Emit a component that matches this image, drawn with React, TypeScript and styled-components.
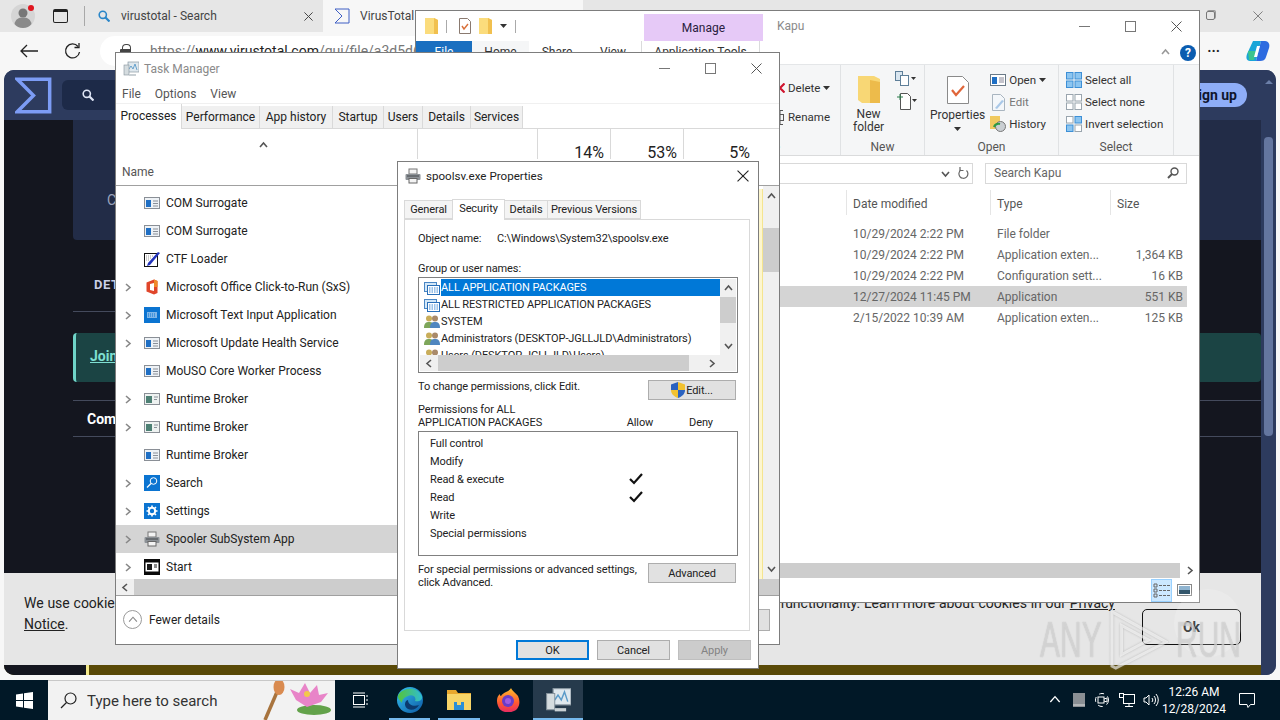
import React from "react";
import styled, { createGlobalStyle } from "styled-components";

const UI = `Roboto, "Liberation Sans", sans-serif`;

const GlobalStyle = createGlobalStyle`
  html, body { margin: 0; padding: 0; width: 1280px; height: 720px; overflow: hidden; }
  body { font-family: ${UI}; font-size: 12px; color: #1a1a1a; }
  * { box-sizing: border-box; }
  svg { display: block; flex: none; }
`;

// ---------- icons ----------
const Sigma = ({ size = 16, color = "#3f5fc4", w = 2 }: { size?: number; color?: string; w?: number }) => (
  <svg width={size} height={size} viewBox="0 0 32 32" fill="none" stroke={color} strokeWidth={w}>
    <path d="M2 2H30V30H2L16 16Z" />
  </svg>
);
const Cross = ({ size = 11, color = "#555", w = 1 }: { size?: number; color?: string; w?: number }) => (
  <svg width={size} height={size} viewBox="0 0 11 11" stroke={color} strokeWidth={w}><path d="M.5.5l10 10M10.5.5l-10 10" /></svg>
);
const Minimize = () => (<svg width={11} height={11} stroke="#777"><path d="M0 5.5h11" /></svg>);
const Maximize = () => (<svg width={11} height={11} fill="none" stroke="#777"><rect x=".5" y=".5" width="10" height="10" /></svg>);
const Chevron = ({ dir = "right", color = "#666", size = 9, w = 1.6 }: { dir?: string; color?: string; size?: number; w?: number }) => {
  const d: Record<string, string> = { right: "M3 1l4 3.5L3 8", left: "M6 1L2 4.5 6 8", up: "M1 6l3.5-4L8 6", down: "M1 3l3.5 4L8 3" };
  return (<svg width={size} height={size} viewBox="0 0 9 9" fill="none" stroke={color} strokeWidth={w}><path d={d[dir]} /></svg>);
};
const Drop = () => (<svg width={7} height={4} fill="#333"><path d="M0 0h7L3.5 4z" /></svg>);
const FolderSmall = () => (
  <svg width={13} height={16} viewBox="0 0 13 16"><path d="M0 0h9l4 2v14H0z" fill="#fbdc7c" /><path d="M9 0l4 2v14H9z" fill="#f1c04f" /></svg>
);
const CheckDoc = () => (
  <svg width={12} height={16} viewBox="0 0 12 16"><path d="M.5.5h8l3 3v12H.5z" fill="#fff" stroke="#8a7a70" /><path d="M3 8l2 3 4-5" fill="none" stroke="#d9703a" strokeWidth="1.4" /></svg>
);
const ProcessWin = () => (
  <svg width={16} height={16} viewBox="0 0 16 16"><rect x=".5" y="2.5" width="15" height="11" fill="#eef2f6" stroke="#8a8f96" /><rect x="2" y="5" width="5" height="7" fill="#1f6fc4" /><path d="M9 6h5M9 8.5h5M9 11h5" stroke="#8a9099" /></svg>
);
const RuntimeWin = () => (
  <svg width={16} height={16} viewBox="0 0 16 16"><rect x=".5" y="2.5" width="15" height="11" fill="#eef2f1" stroke="#8a8f96" /><rect x="2" y="5" width="6" height="7" fill="#4d8074" /><path d="M10 6h4M10 8.5h3" stroke="#8a9099" /></svg>
);
const PenIcon = () => (
  <svg width={16} height={16} viewBox="0 0 16 16"><rect x=".5" y="2.5" width="13" height="13" fill="#fff" stroke="#111" /><path d="M2 5h8M2 7h5M2 9h3" stroke="#999" strokeDasharray="1 1" /><path d="M4 12L14 1l2 1L6 14l-3 1z" fill="#2233bb" /></svg>
);
const OfficeIcon = () => (
  <svg width={16} height={16} viewBox="0 0 16 16"><path d="M2.5 3.5L10 .5l3.5 1.5v12L10 15.5l-7.5-3z" fill="#e0452a" /><path d="M6 5l4-1v8l-4-1z" fill="#fff" /><path d="M10 .5l3.5 1.5v6H10z" fill="#f08a2a" /></svg>
);
const KeyboardTile = () => (
  <svg width={16} height={16} viewBox="0 0 16 16"><rect width="16" height="16" fill="#0b74d1" /><rect x="3" y="5" width="10" height="6" fill="#7fb6e8" /><path d="M4 7h8M4 9h8" stroke="#0b74d1" strokeDasharray="1 1" /></svg>
);
const SearchTile = () => (
  <svg width={16} height={16} viewBox="0 0 16 16" fill="none"><rect width="16" height="16" fill="#0b74d1" /><circle cx="9.5" cy="6" r="3.3" stroke="#fff" /><path d="M7 8.5l-4 4" stroke="#fff" strokeWidth="1.2" /></svg>
);
const SettingsTile = () => (
  <svg width={16} height={16} viewBox="0 0 16 16"><rect width="16" height="16" fill="#0b74d1" /><circle cx="8" cy="8" r="3.2" fill="none" stroke="#fff" strokeWidth="2" /><path d="M8 2.5v2M8 11.5v2M2.5 8h2M11.5 8h2M4 4l1.5 1.5M10.5 10.5L12 12M12 4l-1.5 1.5M5.5 10.5L4 12" stroke="#fff" strokeWidth="1.6" /></svg>
);
const PrinterIcon = () => (
  <svg width={16} height={16} viewBox="0 0 16 16"><rect x="4" y="1" width="8" height="5" fill="#f3f3f3" stroke="#777" /><rect x=".5" y="6" width="15" height="6" rx="1" fill="#8c9196" /><path d="M2 8h12" stroke="#44484c" /><rect x="4" y="10.5" width="8" height="4.5" fill="#f3f3f3" stroke="#666" /></svg>
);
const StartTile = () => (
  <svg width={16} height={16} viewBox="0 0 16 16"><rect width="16" height="16" fill="#0a0a0a" /><rect x="1.5" y="3.5" width="13" height="9" fill="#fff" /><rect x="3" y="5" width="5" height="6" fill="#1a1a1a" /><path d="M10 6h3M10 8h3" stroke="#1a1a1a" /></svg>
);
const PackageIcon = () => (
  <svg width={16} height={16} viewBox="0 0 16 16"><rect x=".5" y="2.5" width="12" height="9" fill="#d4e8f8" stroke="#4a86c4" /><rect x="3.5" y="5.5" width="12" height="9" fill="#fff" stroke="#2a6fb8" /><path d="M5 8h9M5 10h9M5 12h9" stroke="#3b87d4" strokeDasharray="1.5 1" /></svg>
);
const UsersIcon = () => (
  <svg width={16} height={16} viewBox="0 0 16 16"><circle cx="5" cy="4.5" r="3" fill="#c9ad5a" /><path d="M0 14c0-5 2-6 5-6s5 1 5 6z" fill="#7ea65a" /><circle cx="11" cy="4.5" r="3" fill="#a98a6a" /><path d="M6 14c0-5 2-6 5-6s5 1 5 6z" fill="#4f86c0" /></svg>
);
const Shield = () => (
  <svg width={14} height={16} viewBox="0 0 14 16"><path d="M7 0L0 2.5V8h7z" fill="#2a62c0" /><path d="M7 0l7 2.5V8H7z" fill="#f2c230" /><path d="M0 8c0 4 3 6.5 7 8V8z" fill="#f2c230" /><path d="M14 8c0 4-3 6.5-7 8V8z" fill="#2a62c0" /></svg>
);
const Check = () => (
  <svg width={14} height={12} viewBox="0 0 14 12" fill="none" stroke="#111" strokeWidth="2.2"><path d="M1 6l4 4 8-9" /></svg>
);
const SmallMagnifier = ({ color = "#555" }: { color?: string }) => (
  <svg width={12} height={12} viewBox="0 0 12 12" fill="none" stroke={color} strokeWidth="1.4"><circle cx="7.5" cy="4.5" r="3.5" /><path d="M5 7l-4 4" strokeWidth="2" /></svg>
);
const GlassRight = ({ color = "#555" }: { color?: string }) => (
  <svg width={12} height={12} viewBox="0 0 12 12" fill="none" stroke={color} strokeWidth="1.6"><circle cx="4.8" cy="4.8" r="3.6" /><path d="M7.5 7.5l4 4" strokeWidth="2.2" /></svg>
);
const TaskManagerIcon = ({ size = 16 }: { size?: number }) => (
  <svg width={size} height={size} viewBox="0 0 16 16"><rect x="5" y="1" width="11" height="10" fill="#dfe8ee" stroke="#8b98a2" strokeWidth=".7" /><path d="M6 8l2-3 2 3 2-5 2 6" fill="none" stroke="#5a9ac8" strokeWidth=".9" /><rect x="1" y="4" width="5" height="10" fill="#d5dcdf" stroke="#84919b" strokeWidth=".6" /><path d="M6 13h7v2H6z" fill="#c9d0d4" /></svg>
);
const BigFolder = () => (
  <svg width={22} height={27} viewBox="0 0 22 27"><path d="M0 0h16l6 3v24H4l-4-3z" fill="#f8d775" /><path d="M12 4l10 2v21H12z" fill="#edbb4b" /></svg>
);
const CopyIcon = () => (
  <svg width={22} height={16} viewBox="0 0 22 16" fill="none" stroke="#5e7f99"><rect x=".5" y=".5" width="7" height="9" fill="#d9e6f0" /><rect x="5.5" y="4.5" width="8" height="10" fill="#fff" /><path d="M16 6h5l-2.5 3z" fill="#333" stroke="none" /></svg>
);
const NewItemIcon = () => (
  <svg width={22} height={17} viewBox="0 0 22 17" fill="none" stroke="#555"><path d="M5.5.5h7l3 3v13h-10z" fill="#fff" /><path d="M2 4h6M5 1v6" stroke="#2a7a4a" /><path d="M17 6h5l-2.5 3z" fill="#333" stroke="none" /></svg>
);
const PropertiesIcon = () => (
  <svg width={22} height={28} viewBox="0 0 22 28"><path d="M.5.5h15l6 6v21H.5z" fill="#fff" stroke="#8a8a8a" /><path d="M5 14l4 5 8-9" fill="none" stroke="#e0663a" strokeWidth="2.2" /></svg>
);
const OpenIcon = () => (
  <svg width={16} height={12} viewBox="0 0 16 12"><rect x=".5" y=".5" width="15" height="11" fill="#fff" stroke="#6a7a88" /><rect x="2" y="3" width="5" height="7" fill="#1f6fc4" /><path d="M9 4h5M9 6h5M9 8h5" stroke="#889" /></svg>
);
const EditIcon = () => (
  <svg width={16} height={17} viewBox="0 0 16 17"><path d="M2.5.5h8l4 4v12h-12z" fill="#f4f7fa" stroke="#a9b5c0" /><path d="M5 14l7-8 2 1-7 8z" fill="#a9c8e8" /></svg>
);
const HistoryIcon = () => (
  <svg width={16} height={16} viewBox="0 0 16 16"><path d="M0 0h10v13H0z" fill="#f0c95f" /><circle cx="10.5" cy="10.5" r="5" fill="#c9ced2" stroke="#777" /><path d="M4 11a5 5 0 0 1 6-3" stroke="#2f9a44" strokeWidth="2.2" fill="none" /></svg>
);
const RenameIcon = () => (
  <svg width={10} height={15} viewBox="0 0 10 15" fill="none" stroke="#555"><path d="M2 .5h6M5 .5v14M2 14.5h6" /><rect x="1.5" y="4.5" width="7" height="6" /></svg>
);
const SelectIcon = ({ fill }: { fill: boolean[] }) => (
  <svg width={16} height={16} viewBox="0 0 16 16">
    {[[0, 0], [8.5, 0], [0, 8.5], [8.5, 8.5]].map(([x, y], i) => (
      <rect key={i} x={x + 0.5} y={y + 0.5} width="6.5" height="6.5" fill={fill[i] ? "#8cc5f0" : "#fff"} stroke={fill[i] ? "#3d8fd6" : "#9aa5ae"} />
    ))}
  </svg>
);
const ViewDetails = () => (
  <svg width={18} height={16} viewBox="0 0 18 16" fill="none" stroke="#666"><path d="M1 2h3v3H1zM1 7h3v3H1zM1 12h3v3H1z" /><path d="M6 3.5h11M6 8.5h11M6 13.5h11" strokeDasharray="3 1" /></svg>
);
const ViewPreview = () => (
  <svg width={15} height={12} viewBox="0 0 15 12"><rect x=".5" y=".5" width="14" height="11" fill="#fff" stroke="#888" /><path d="M2 2h11v4H2z" fill="#8fb4d0" /><path d="M2 6h11v4H2z" fill="#33566b" /></svg>
);
const Edge = () => (
  <svg width={26} height={26} viewBox="0 0 26 26">
    <defs>
      <linearGradient id="edgeA" x1="0" y1="0" x2="1" y2="1"><stop offset="0" stopColor="#35c1f1" /><stop offset="1" stopColor="#0c59a4" /></linearGradient>
      <linearGradient id="edgeB" x1="0" y1="0" x2="1" y2="0"><stop offset="0" stopColor="#54c43c" /><stop offset="1" stopColor="#2fbcd2" /></linearGradient>
    </defs>
    <circle cx="13" cy="13" r="13" fill="url(#edgeA)" />
    <path d="M1 9C4 1 20-2 25 9c1 4-3 6-7 5 2-4-3-7-7-5-3 1-6 3-6 7-1-2-4-3-4-7z" fill="url(#edgeB)" />
    <path d="M11 13c0 5 6 7 11 5-2 4-7 6-11 4-4-2-4-8 0-9z" fill="#0b3a6e" />
  </svg>
);
const TaskFolder = () => (
  <svg width={24} height={20} viewBox="0 0 24 20"><path d="M0 0h9l2 3h13v3H0z" fill="#e8a82e" /><path d="M0 4h24v16H0z" fill="#f7d568" /><path d="M7 12h10v8H7z" fill="#2a8fd8" /><path d="M10 12h4v3h-4z" fill="#f7d568" /></svg>
);
const Firefox = () => (
  <svg width={24} height={24} viewBox="0 0 24 24">
    <defs><linearGradient id="ffA" x1="0" y1="0" x2="0" y2="1"><stop offset="0" stopColor="#ffbd2e" /><stop offset=".6" stopColor="#ff5a30" /><stop offset="1" stopColor="#e62a63" /></linearGradient></defs>
    <path d="M15 0c1 3 5 5 7 8 3 6 1 13-4 15-6 3-14 1-16-5C0 13 1 8 4 6c0 1 0 2 1 2 1-2 3-3 5-4 2-1 4-2 5-4z" fill="url(#ffA)" />
    <circle cx="12" cy="13" r="6" fill="#6a3cc8" /><circle cx="12" cy="13" r="3" fill="#a05ae0" />
  </svg>
);
const Lotus = () => (
  <svg width={70} height={40} viewBox="0 0 70 40">
    <path d="M3 40L15 12" stroke="#a8743e" strokeWidth="3.5" /><ellipse cx="17" cy="7" rx="5.5" ry="8" fill="#d98b50" />
    <ellipse cx="52" cy="30" rx="17" ry="5" fill="#63a24a" />
    <path d="M34 20L28 9l9 4 6-10 5 10 7-8 2 10 9-2-7 9-14 5z" fill="#e884c8" /><circle cx="45" cy="14" r="3" fill="#f2c84a" />
  </svg>
);
const Copilot = () => (
  <svg width={24} height={24} viewBox="0 0 24 24"><path d="M7 2h8l-5 20H4C0 22 0 18 1 15z" fill="#19a5d8" /><path d="M15 2h4c4 0 5 4 4 7l-3 9c-1 3-3 4-6 4h-4z" fill="#2d6be0" /><path d="M2 12h8l-2 9H3z" fill="#3cc48e" /><path d="M11 7l3 0-3 11-3 0z" fill="#fff" /></svg>
);
const BackArrow = () => (
  <svg width={18} height={14} viewBox="0 0 18 14" fill="none" stroke="#222" strokeWidth="1.3"><path d="M18 7H1M7 1L1 7l6 6" /></svg>
);
const ReloadArrow = () => (
  <svg width={17} height={17} viewBox="0 0 17 17" fill="none" stroke="#222" strokeWidth="1.3"><path d="M14 3.5A7 7 0 1 0 15.5 9" /><path d="M15 0v4.5h-4.5" /></svg>
);
const ReloadArrowSmall = () => (
  <svg width={11} height={12} viewBox="0 0 11 12" fill="none" stroke="#666" strokeWidth="1.2"><path d="M8.500 3.500a4.500 4.500 0 1 1-5.500-.5" /><path d="M2 0v3.500h3.500" /></svg>
);
const PersonAvatar = () => (
  <svg width={24} height={24} viewBox="0 0 24 24"><circle cx="12" cy="12" r="12" fill="#d5d5d5" /><circle cx="12" cy="9" r="4.5" fill="#777" /><path d="M3.500 20c1-5 4-6.500 8.500-6.500s7.500 1.500 8.500 6.500c-2 2.500-5 4-8.500 4s-6.500-1.500-8.500-4z" fill="#8a8a8a" /></svg>
);

// ---------- browser behind ----------
const Screen = styled.div`
  width: 1280px;
  height: 720px;
  position: relative;
  overflow: hidden;
  display: flex;
  flex-direction: column;
  background: #f7f7f7;
`;
const Browser = styled.div`
  height: 680px;
  display: flex;
  flex-direction: column;
`;
const TabStrip = styled.div`
  height: 32px;
  background: #e6e6e6;
  display: flex;
  align-items: center;
  padding-left: 11px;
`;
const Avatar = styled.div`
  width: 24px;
  height: 24px;
  position: relative;
  margin-right: 18px;
  &::after {
    content: "";
    position: absolute;
    top: 1px;
    right: 1px;
    width: 6px;
    height: 6px;
    border-radius: 50%;
    background: #e0161f;
  }
`;
const TabsBtn = styled.div`
  width: 15px;
  height: 14px;
  border: 1.5px solid #222;
  border-top-width: 3px;
  border-radius: 2px;
  margin-right: 16px;
`;
const TabDivider = styled.div`
  width: 1px;
  height: 20px;
  background: #a8a8a8;
`;
const Tab = styled.div<{ $active?: boolean }>`
  height: 32px;
  width: ${(p) => (p.$active ? "260px" : "238px")};
  padding-left: ${(p) => (p.$active ? "11px" : "13px")};
  display: flex;
  align-items: center;
  gap: ${(p) => (p.$active ? "10px" : "11px")};
  background: ${(p) => (p.$active ? "#f7f7f7" : "#e6e6e6")};
  font-size: 12px;
  color: #444;
  justify-content: flex-start;
`;
const TabTitle = styled.span`
  flex: 1;
`;
const TabClose = styled.span`
  margin-right: 10px;
`;
const BrowserControls = styled.div`
  margin-left: auto;
  display: flex;
  gap: 38px;
  padding-right: 17px;
`;
const RestoreIcon = styled.div`
  width: 9px;
  height: 9px;
  border: 1px solid #777;
  border-radius: 2px;
  box-shadow: 1px -1px 0 0 #999;
`;
const Toolbar = styled.div`
  height: 38px;
  display: flex;
  align-items: center;
  padding: 0 10px 0 20px;
`;
const ToolBtn = styled.div`
  width: 44px;
`;
const AddressPill = styled.div`
  width: 900px;
  height: 30px;
  background: #fff;
  border-radius: 15px;
  margin-left: -8px;
  display: flex;
  align-items: center;
  padding-left: 20px;
  gap: 19px;
  font-size: 14px;
  color: #777;
`;
const Lock = styled.div`
  width: 11px;
  height: 9px;
  background: #444;
  border-radius: 1px;
  position: relative;
  top: 2px;
  &::before {
    content: "";
    position: absolute;
    left: 2px;
    top: -5px;
    width: 7px;
    height: 6px;
    border: 1.5px solid #444;
    border-bottom: 0;
    border-radius: 4px 4px 0 0;
  }
`;
const UrlHost = styled.span`
  color: #222;
`;
const ToolRight = styled.div`
  margin-left: auto;
  display: flex;
  align-items: center;
  gap: 26px;
  font-size: 14px;
  font-weight: 700;
  color: #222;
`;
const Page = styled.div`
  flex: 1;
  margin: 0 4px 5px;
  border-radius: 10px;
  overflow: hidden;
  display: flex;
  background: #2d3b5e;
`;
const PageMain = styled.div`
  flex: 1;
  display: flex;
  flex-direction: column;
`;
const PageHeader = styled.div`
  height: 50px;
  background: #2d3b5e;
  display: flex;
  align-items: center;
  padding: 0 14px 0 11px;
`;
const SearchField = styled.div`
  width: 700px;
  height: 30px;
  margin-left: 10px;
  background: #1d2a48;
  border-radius: 6px;
  display: flex;
  align-items: center;
  padding-left: 20px;
`;
const SignUp = styled.div`
  margin-left: auto;
  height: 24px;
  padding: 0 10px 0 14px;
  background: #8eadf7;
  border-radius: 12px;
  color: #10152e;
  font-size: 14px;
  font-weight: 700;
  line-height: 24px;
`;
const PageBody = styled.div`
  flex: 1;
  background: #14161f;
  padding-left: 69px;
  display: flex;
  flex-direction: column;
`;
const Hero = styled.div`
  height: 120px;
  background: #222c47;
  border-radius: 0 0 0 4px;
  padding: 72px 0 0 34px;
  color: #9ba4bd;
  font-size: 14px;
`;
const SectionTitle = styled.div`
  height: 72px;
  padding: 37px 0 0 21px;
  margin-right: 70px;
  border-bottom: 1px solid #444a5c;
  color: #c9cfe6;
  font-size: 13px;
  font-weight: 700;
  letter-spacing: 0.6px;
`;
const JoinBox = styled.div`
  height: 49px;
  margin-top: 21px;
  background: #1b4444;
  border-left: 3px solid #6fd4c8;
  border-radius: 4px;
  padding: 15px 0 0 14px;
  color: #7fe0d2;
  font-size: 14px;
  font-weight: 700;
  text-decoration: underline;
`;
const ComRow = styled.div`
  height: 37px;
  margin-top: 18px;
  border-top: 1px solid #444a5c;
  border-bottom: 1px solid #444a5c;
  padding: 10px 0 0 14px;
  color: #fff;
  font-size: 14px;
  font-weight: 700;
`;
const CookieBanner = styled.div`
  height: 92px;
  background: #e6e6e6;
  padding: 20px 146px 0 20px;
  position: relative;
`;
const CookieText = styled.div`
  font-size: 14px;
  line-height: 21px;
  color: #222;
  text-align: justify;
  width: 1091px;
`;
const CookieLink = styled.span`
  text-decoration: underline;
`;
const CookieOk = styled.div`
  position: absolute;
  right: 20px;
  top: 36px;
  width: 99px;
  height: 36px;
  border: 1px solid #111;
  border-radius: 5px;
  display: flex;
  align-items: center;
  justify-content: center;
  font-size: 14px;
  font-weight: 700;
`;
const LoadBar = styled.div`
  height: 10px;
  background: #5a4a08;
  border-left: 82px solid #14161f;
  box-shadow: inset 3px 0 0 #f3e98c;
`;
const ScrollTrack = styled.div`
  width: 15px;
  background: #2d3b5e;
  padding: 10px 3px 0;
`;
const ScrollArrow = styled.div`
  width: 0;
  margin: 0 auto 53px;
  border: 4px solid transparent;
  border-bottom-color: #6b7fa8;
  border-top: 0;
`;
const ScrollThumb = styled.div`
  height: 299px;
  background: #64769f;
  border-radius: 4px;
`;

// ---------- windows ----------
const Win = styled.div<{ $x: number; $y: number; $w: number; $h: number }>`
  position: absolute;
  left: ${(p) => p.$x}px;
  top: ${(p) => p.$y}px;
  width: ${(p) => p.$w}px;
  height: ${(p) => p.$h}px;
  background: #fff;
  border: 1px solid #7d7d7d;
  display: flex;
  flex-direction: column;
  overflow: hidden;
`;
const DialogWin = styled(Win)`
  font-size: 11px;
  letter-spacing: -0.1px;
`;
const WinControls = styled.div`
  margin-left: auto;
  display: flex;
  align-items: center;
  gap: 35px;
  padding-right: 17px;
`;

// explorer
const ExTitle = styled.div`
  height: 30px;
  display: flex;
  align-items: center;
  padding-left: 9px;
  flex: none;
`;
const QuickBar = styled.div`
  display: flex;
  align-items: center;
  gap: 8px;
  width: 219px;
`;
const QuickSep = styled.div<{ $right?: number }>`
  width: 1px;
  height: 13px;
  background: #aaa;
  margin-right: ${(p) => p.$right || 0}px;
`;
const ManageTab = styled.div`
  width: 119px;
  height: 27px;
  margin-top: 3px;
  background: #e6c9f7;
  display: flex;
  align-items: center;
  justify-content: center;
  color: #2a2140;
`;
const ExName = styled.div`
  margin-left: 14px;
  color: #8a8a8a;
`;
const RibbonTabs = styled.div`
  height: 23px;
  display: flex;
  align-items: center;
  flex: none;
  padding-right: 3px;
`;
const RibbonTab = styled.div<{ $bg?: string; $color?: string; $w: number; $framed?: boolean }>`
  width: ${(p) => p.$w}px;
  height: 23px;
  line-height: 23px;
  text-align: center;
  background: ${(p) => p.$bg || "transparent"};
  color: ${(p) => p.$color || "#333"};
  border-left: ${(p) => (p.$framed ? "1px solid #dadbdc" : "0")};
  border-right: ${(p) => (p.$framed ? "1px solid #dadbdc" : "0")};
`;
const RibbonRight = styled.div`
  margin-left: auto;
  display: flex;
  align-items: center;
  gap: 10px;
`;
const HelpDot = styled.div`
  width: 16px;
  height: 16px;
  border-radius: 50%;
  background: #0a5cb0;
  color: #fff;
  font-size: 12px;
  font-weight: 700;
  text-align: center;
  line-height: 16px;
`;
const Ribbon = styled.div`
  height: 92px;
  flex: none;
  background: #f5f6f7;
  border-top: 1px solid #e4e6e8;
  border-bottom: 1px solid #dadbdc;
  display: flex;
  justify-content: flex-end;
  padding-right: 25px;
`;
const RGroup = styled.div<{ $w: number }>`
  width: ${(p) => p.$w}px;
  border-right: 1px solid #e0e2e4;
  display: flex;
  flex-direction: column;
  padding-top: 4px;
`;
const RBody = styled.div<{ $pad?: number; $gap?: number }>`
  flex: 1;
  display: flex;
  padding-left: ${(p) => p.$pad || 0}px;
  gap: ${(p) => p.$gap ?? 4}px;
`;
const RLabel = styled.div`
  height: 16px;
  line-height: 16px;
  text-align: center;
  color: #555;
`;
const BigBtn = styled.div`
  display: flex;
  flex-direction: column;
  align-items: center;
  line-height: 13px;
  color: #333;
  gap: 5px;
  padding-top: 7px;
`;
const BigLabel = styled.div`
  text-align: center;
  white-space: pre-line;
`;
const SmallCol = styled.div<{ $gap?: number; $top?: number }>`
  display: flex;
  flex-direction: column;
  gap: ${(p) => p.$gap ?? 4}px;
  padding-top: ${(p) => p.$top ?? 2}px;
`;
const SmallBtn = styled.div<{ $dim?: boolean }>`
  height: 18px;
  display: flex;
  align-items: center;
  gap: 3px;
  font-size: 11.5px;
  color: ${(p) => (p.$dim ? "#777" : "#333")};
  white-space: nowrap;
`;
const AddressRow = styled.div`
  height: 34px;
  flex: none;
  display: flex;
  align-items: center;
  padding: 0 12px 0 8px;
  gap: 12px;
`;
const AddrBox = styled.div`
  flex: 1;
  height: 21px;
  border: 1px solid #d9d9d9;
  display: flex;
  align-items: center;
  justify-content: flex-end;
  gap: 8px;
  padding-right: 3px;
`;
const SearchBoxEx = styled.div`
  width: 202px;
  flex: none;
  height: 21px;
  border: 1px solid #d9d9d9;
  display: flex;
  align-items: center;
  justify-content: space-between;
  padding: 0 7px 0 8px;
  color: #666;
`;
const FileList = styled.div`
  flex: 1;
`;
const FileHead = styled.div`
  height: 25px;
  display: grid;
  grid-template-columns: 430px 144px 120px 80px;
  align-items: center;
  margin-bottom: 8px;
  color: #555;
`;
const HeadCell = styled.div`
  height: 25px;
  line-height: 28px;
  padding-left: 6px;
  border-left: 1px solid #e5e5e5;
`;
const FileRow = styled.div<{ $selected?: boolean }>`
  height: 21px;
  width: 771px;
  display: grid;
  grid-template-columns: 437px 144px 120px 66px;
  align-items: center;
  background: ${(p) => (p.$selected ? "#d4d4d4" : "transparent")};
  color: #666;
`;
const FileSize = styled.div`
  text-align: right;
`;
const ExHScroll = styled.div`
  height: 15px;
  flex: none;
  display: flex;
  align-items: center;
  background: #fff;
`;
const ExThumb = styled.div`
  height: 15px;
  flex: 1;
  background: #cdcdcd;
`;
const ExArrow = styled.div`
  width: 19px;
  display: flex;
  justify-content: center;
`;
const StatusBar = styled.div`
  height: 24px;
  flex: none;
  display: flex;
  justify-content: flex-end;
  align-items: center;
  gap: 3px;
  padding-right: 6px;
`;
const ViewBtn = styled.div<{ $on?: boolean }>`
  width: ${(p) => (p.$on ? 21 : 18)}px;
  height: 23px;
  display: flex;
  align-items: center;
  justify-content: center;
  background: ${(p) => (p.$on ? "#cce8ff" : "transparent")};
  border: 1px solid ${(p) => (p.$on ? "#99d1ff" : "transparent")};
`;

// task manager
const TmTitle = styled.div`
  height: 31px;
  flex: none;
  display: flex;
  align-items: center;
  padding-left: 7px;
  gap: 5px;
  color: #8a8a8a;
`;
const TmMenu = styled.div`
  height: 19px;
  flex: none;
  display: flex;
  align-items: center;
  gap: 14px;
  padding-left: 6px;
  color: #555;
`;
const TmTabs = styled.div`
  height: 26px;
  flex: none;
  display: flex;
  align-items: flex-end;
  border-top: 1px solid #f0f0f0;
  border-bottom: 1px solid #d9d9d9;
`;
const TmTab = styled.div<{ $w: number; $on?: boolean }>`
  width: ${(p) => p.$w}px;
  height: ${(p) => (p.$on ? "25px" : "22px")};
  margin-bottom: ${(p) => (p.$on ? "-1px" : "0")};
  padding-bottom: ${(p) => (p.$on ? "2px" : "0")};
  display: flex;
  align-items: center;
  justify-content: center;
  background: ${(p) => (p.$on ? "#fff" : "#f0f0f0")};
  border-right: 1px solid #d9d9d9;
  color: #222;
`;
const TmHead = styled.div`
  height: 57px;
  flex: none;
  display: flex;
  border-bottom: 1px solid #a0a0a0;
`;
const TmNameCol = styled.div`
  width: 301px;
  display: flex;
  flex-direction: column;
  color: #555;
  padding: 12px 0 0 6px;
`;
const SortCaret = styled.div`
  margin: 0 0 15px 137px;
`;
const TmBlank = styled.div`
  width: 120px;
  border-left: 1px solid #d9d9d9;
  height: 30px;
`;
const TmPct = styled.div`
  width: 73px;
  height: 30px;
  border-left: 1px solid #d9d9d9;
  text-align: right;
  padding: 14px 6px 0 0;
  font-size: 16px;
  color: #222;
`;
const TmBody = styled.div`
  flex: 1;
  display: flex;
  min-height: 0;
  overflow: hidden;
`;
const TmRows = styled.div`
  flex: 1;
  padding-top: 3px;
`;
const TmRow = styled.div<{ $selected?: boolean }>`
  height: 28px;
  display: flex;
  align-items: center;
  background: ${(p) => (p.$selected ? "#d4d4d4" : "transparent")};
`;
const TmChevron = styled.div`
  width: 28px;
  padding-left: 7px;
`;
const TmRowName = styled.div`
  margin-left: 6px;
  flex: 1;
  color: #222;
`;
const HeatCell = styled.div`
  width: 5px;
  height: 28px;
  background: #fdf6cf;
  border-right: 1px solid #f5e58f;
`;
const TmVScroll = styled.div`
  width: 16px;
  background: #f0f0f0;
  display: flex;
  flex-direction: column;
  align-items: center;
  padding-top: 6px;
`;
const TmVThumb = styled.div`
  width: 16px;
  height: 44px;
  flex: none;
  background: #cdcdcd;
  margin: 27px 0 292px;
`;
const TmHScroll = styled.div`
  height: 17px;
  flex: none;
  display: flex;
  background: #f0f0f0;
  border-bottom: 1px solid #a0a0a0;
  align-items: center;
`;
const TmHArrow = styled.div`
  width: 18px;
  display: flex;
  justify-content: center;
`;
const TmHThumb = styled.div`
  flex: 1;
  height: 16px;
  background: #cdcdcd;
`;
const TmFooter = styled.div`
  height: 48px;
  flex: none;
  display: flex;
  align-items: center;
  padding: 0 9px 1px 7px;
  gap: 7px;
  color: #222;
`;
const FewerCircle = styled.div`
  width: 19px;
  height: 19px;
  border: 1px solid #9a9a9a;
  border-radius: 50%;
  display: flex;
  align-items: center;
  justify-content: center;
`;
const EndTask = styled.div`
  margin-left: auto;
  width: 75px;
  height: 22px;
  background: #e1e1e1;
  border: 1px solid #adadad;
`;

// properties dialog
const DlgTitle = styled.div`
  height: 37px;
  flex: none;
  display: flex;
  align-items: center;
  padding: 0 9px 10px 7px;
  gap: 5px;
  font-size: 11.6px;
  letter-spacing: 0;
  color: #222;
`;
const DlgClose = styled.div`
  margin-left: auto;
`;
const DlgTabs = styled.div`
  height: 20px;
  flex: none;
  display: flex;
  align-items: flex-end;
  padding-left: 7px;
`;
const DlgTab = styled.div<{ $w: number; $on?: boolean }>`
  width: ${(p) => p.$w}px;
  height: ${(p) => (p.$on ? "21px" : "19px")};
  margin-bottom: ${(p) => (p.$on ? "-1px" : "0")};
  position: relative;
  z-index: ${(p) => (p.$on ? 1 : 0)};
  padding-bottom: ${(p) => (p.$on ? "3px" : "0")};
  display: flex;
  align-items: center;
  justify-content: center;
  white-space: nowrap;
  background: ${(p) => (p.$on ? "#fff" : "#f4f4f4")};
  border: 1px solid #d9d9d9;
  border-bottom: ${(p) => (p.$on ? "0" : "1px solid #d9d9d9")};
  margin-left: -1px;
  color: #222;
`;
const DlgPanel = styled.div`
  height: 412px;
  flex: none;
  margin: 0 8px 0 6px;
  border: 1px solid #d9d9d9;
  padding: 12px 0 0 13px;
  color: #222;
`;
const ObjectRow = styled.div`
  display: flex;
  height: 14px;
  line-height: 14px;
  margin-bottom: 16px;
`;
const ObjectLabel = styled.div`
  width: 79px;
`;
const PlainLine = styled.div`
  height: 13px;
  line-height: 13px;
`;
const UserBox = styled.div`
  width: 320px;
  height: 96px;
  margin-top: 2px;
  border: 1px solid #808080;
  display: grid;
  grid-template-columns: 1fr 16px;
  grid-template-rows: 1fr 16px;
  overflow: hidden;
  padding: 1px;
`;
const UserRows = styled.div`
  overflow: hidden;
  padding-left: 4px;
  padding-top: 0;
`;
const UserRow = styled.div`
  height: 17px;
  display: flex;
  align-items: center;
  gap: 1px;
  white-space: nowrap;
`;
const UserName = styled.div<{ $selected?: boolean }>`
  flex: 1;
  height: 17px;
  line-height: 17px;
  background: ${(p) => (p.$selected ? "#0078d7" : "transparent")};
  color: ${(p) => (p.$selected ? "#fff" : "#222")};
`;
const UserV = styled.div`
  background: #f0f0f0;
  display: flex;
  flex-direction: column;
  align-items: center;
  padding-top: 5px;
`;
const UserVThumb = styled.div`
  width: 16px;
  height: 26px;
  flex: none;
  background: #cdcdcd;
  margin: 4px 0 18px;
`;
const UserH = styled.div`
  display: flex;
  align-items: center;
  background: #f0f0f0;
`;
const UserHArrow = styled.div<{ $end?: boolean }>`
  width: 18px;
  display: flex;
  justify-content: center;
  margin-left: ${(p) => (p.$end ? "auto" : "0")};
`;
const UserHThumb = styled.div`
  width: 251px;
  height: 16px;
  background: #cdcdcd;
`;
const UserCorner = styled.div`
  background: #f0f0f0;
`;
const ActionRow = styled.div`
  display: flex;
  justify-content: space-between;
  align-items: flex-start;
  width: 318px;
  margin-top: 7px;
`;
const DlgButton = styled.div<{ $w?: number; $primary?: boolean; $off?: boolean }>`
  width: ${(p) => p.$w || 88}px;
  flex: none;
  height: 20px;
  display: flex;
  align-items: center;
  justify-content: center;
  gap: 1px;
  background: ${(p) => (p.$primary ? "#e1e1e1" : p.$off ? "#cccccc" : "#e1e1e1")};
  border: ${(p) => (p.$primary ? "2px solid #0078d7" : p.$off ? "1px solid #bfbfbf" : "1px solid #adadad")};
  color: ${(p) => (p.$off ? "#838383" : "#222")};
`;
const PermHead = styled.div`
  width: 320px;
  display: flex;
  align-items: flex-end;
  margin-top: 3px;
  line-height: 13px;
  height: 26px;
`;
const PermTitle = styled.div`
  width: 198px;
  white-space: pre-line;
`;
const PermCol = styled.div`
  width: 48px;
  text-align: center;
  margin-right: 13px;
`;
const PermBox = styled.div`
  width: 320px;
  height: 125px;
  margin-top: 2px;
  border: 1px solid #808080;
  padding: 2px 11px;
`;
const PermRow = styled.div`
  height: 18px;
  display: grid;
  grid-template-columns: 199px 14px;
  align-items: center;
`;
const AdvancedText = styled.div`
  white-space: pre-line;
  line-height: 13px;
  margin-top: 0;
`;
const DlgFooter = styled.div`
  flex: 1;
  display: flex;
  justify-content: flex-end;
  gap: 8px;
  padding: 9px 7px 0 0;
`;

// taskbar
const Taskbar = styled.div`
  height: 40px;
  flex: none;
  background: #011827;
  display: flex;
  align-items: stretch;
  color: #fff;
`;
const StartBtn = styled.div`
  width: 48px;
  display: flex;
  align-items: center;
  justify-content: center;
`;
const SearchBar = styled.div`
  width: 287px;
  background: #f2f2f2;
  border-top: 1px solid #c8c8c8;
  display: flex;
  align-items: center;
  padding-left: 12px;
  gap: 10px;
  color: #333;
  font-size: 15px;
  position: relative;
  overflow: hidden;
`;
const SearchArt = styled.div`
  position: absolute;
  right: 3px;
  bottom: 0;
`;
const TaskItem = styled.div<{ $open?: boolean; $active?: boolean; $w?: number }>`
  width: ${(p) => p.$w || 49.4}px;
  display: flex;
  align-items: center;
  justify-content: center;
  position: relative;
  background: ${(p) => (p.$active ? "#263a4c" : "transparent")};
  &::after {
    content: "";
    display: ${(p) => (p.$open ? "block" : "none")};
    position: absolute;
    bottom: 0;
    left: ${(p) => (p.$active ? "0" : "4px")};
    right: ${(p) => (p.$active ? "0" : "4px")};
    height: 2px;
    background: #76b9ed;
  }
`;
const Tray = styled.div`
  margin-left: auto;
  display: flex;
  align-items: center;
  gap: 8px;
  padding-right: 25px;
`;
const TrayIcon = styled.div`
  width: 16px;
  display: flex;
  justify-content: center;
`;
const Clock = styled.div`
  width: 68px;
  text-align: center;
  font-size: 12px;
  line-height: 17px;
  padding-top: 1px;
  color: #fff;
  margin: 0 3px 0 -7px;
  white-space: nowrap;
`;

// watermark over everything
const Watermark = styled.div`
  position: absolute;
  left: 1040px;
  top: 608px;
  display: flex;
  align-items: center;
  gap: 8px;
  pointer-events: none;
`;
const MarkText = styled.div`
  font-family: "Liberation Sans", sans-serif;
  font-size: 50px;
  line-height: 64px;
  width: 62px;
  color: rgba(255, 255, 255, 0.5);
  text-shadow: 0 0 1px rgba(110, 110, 110, 0.55);
  transform: scaleX(0.6);
  transform-origin: left center;
  white-space: nowrap;
`;
const MarkShape = styled.svg`
  filter: drop-shadow(0 0 1px rgba(110, 110, 110, 0.6));
`;
const MarkGlow = styled.div`
  position: absolute;
  left: 1174px;
  top: 589px;
  width: 68px;
  height: 68px;
  border-radius: 50%;
  background: rgba(255, 255, 255, 0.18);
  pointer-events: none;
`;

type Proc = { name: string; icon: React.ReactNode; expand?: boolean; selected?: boolean };
const processes: Proc[] = [
  { name: "COM Surrogate", icon: <ProcessWin /> },
  { name: "COM Surrogate", icon: <ProcessWin /> },
  { name: "CTF Loader", icon: <PenIcon /> },
  { name: "Microsoft Office Click-to-Run (SxS)", icon: <OfficeIcon />, expand: true },
  { name: "Microsoft Text Input Application", icon: <KeyboardTile />, expand: true },
  { name: "Microsoft Update Health Service", icon: <ProcessWin />, expand: true },
  { name: "MoUSO Core Worker Process", icon: <ProcessWin /> },
  { name: "Runtime Broker", icon: <RuntimeWin />, expand: true },
  { name: "Runtime Broker", icon: <RuntimeWin />, expand: true },
  { name: "Runtime Broker", icon: <ProcessWin /> },
  { name: "Search", icon: <SearchTile />, expand: true },
  { name: "Settings", icon: <SettingsTile />, expand: true },
  { name: "Spooler SubSystem App", icon: <PrinterIcon />, expand: true, selected: true },
  { name: "Start", icon: <StartTile />, expand: true },
];

const files = [
  { date: "10/29/2024 2:22 PM", type: "File folder", size: "" },
  { date: "10/29/2024 2:22 PM", type: "Application exten...", size: "1,364 KB" },
  { date: "10/29/2024 2:22 PM", type: "Configuration sett...", size: "16 KB" },
  { date: "12/27/2024 11:45 PM", type: "Application", size: "551 KB", selected: true },
  { date: "2/15/2022 10:39 AM", type: "Application exten...", size: "125 KB" },
];

const users = [
  { name: "ALL APPLICATION PACKAGES", icon: <PackageIcon />, selected: true },
  { name: "ALL RESTRICTED APPLICATION PACKAGES", icon: <PackageIcon /> },
  { name: "SYSTEM", icon: <UsersIcon /> },
  { name: "Administrators (DESKTOP-JGLLJLD\\Administrators)", icon: <UsersIcon /> },
  { name: "Users (DESKTOP-JGLLJLD\\Users)", icon: <UsersIcon /> },
];

const permissions = [
  { name: "Full control" },
  { name: "Modify" },
  { name: "Read & execute", allow: true },
  { name: "Read", allow: true },
  { name: "Write" },
  { name: "Special permissions" },
];

function BrowserBehind() {
  return (
    <Browser>
      <TabStrip>
        <Avatar><PersonAvatar /></Avatar>
        <TabsBtn />
        <TabDivider />
        <Tab>
          <GlassRight color="#2a86c8" />
          <TabTitle>virustotal - Search</TabTitle>
          <TabClose><Cross size={9} color="#444" w={1.2} /></TabClose>
        </Tab>
        <Tab $active>
          <Sigma />
          <TabTitle>VirusTotal</TabTitle>
        </Tab>
        <BrowserControls>
          <RestoreIcon />
          <Cross size={10} color="#777" />
        </BrowserControls>
      </TabStrip>
      <Toolbar>
        <ToolBtn><BackArrow /></ToolBtn>
        <ToolBtn><ReloadArrow /></ToolBtn>
        <AddressPill>
          <Lock />
          <span>https://<UrlHost>www.virustotal.com</UrlHost>/gui/file/a3d5d6c4</span>
        </AddressPill>
        <ToolRight>
          <span>···</span>
          <Copilot />
        </ToolRight>
      </Toolbar>
      <Page>
        <PageMain>
          <PageHeader>
            <Sigma size={37} color="#7c9cf5" w={3} />
            <SearchField><GlassRight color="#dfe5f5" /></SearchField>
            <SignUp>Sign up</SignUp>
          </PageHeader>
          <PageBody>
            <Hero>Community Score</Hero>
            <SectionTitle>DETECTION</SectionTitle>
            <JoinBox>Join our Community</JoinBox>
            <ComRow>Community</ComRow>
          </PageBody>
          <CookieBanner>
            <CookieText>
              We use cookies and technologies to remember user preferences, for security, to analyse our traffic and to enable website functionality. Learn more about cookies in our <CookieLink>Privacy Notice</CookieLink>.
            </CookieText>
            <CookieOk>Ok</CookieOk>
          </CookieBanner>
          <LoadBar />
        </PageMain>
        <ScrollTrack>
          <ScrollArrow />
          <ScrollThumb />
        </ScrollTrack>
      </Page>
    </Browser>
  );
}

function Explorer() {
  return (
    <Win $x={415} $y={10} $w={785} $h={593}>
      <ExTitle>
        <QuickBar>
          <FolderSmall />
          <QuickSep $right={4} />
          <CheckDoc />
          <FolderSmall />
          <Drop />
          <QuickSep />
        </QuickBar>
        <ManageTab>Manage</ManageTab>
        <ExName>Kapu</ExName>
        <WinControls>
          <Minimize />
          <Maximize />
          <Cross />
        </WinControls>
      </ExTitle>
      <RibbonTabs>
        <RibbonTab $w={56} $bg="#1a6fc0" $color="#fff">File</RibbonTab>
        <RibbonTab $w={57} $bg="#f5f6f7">Home</RibbonTab>
        <RibbonTab $w={56}>Share</RibbonTab>
        <RibbonTab $w={56}>View</RibbonTab>
        <RibbonTab $w={119} $framed>Application Tools</RibbonTab>
        <RibbonRight>
          <Chevron dir="up" color="#999" />
          <HelpDot>?</HelpDot>
        </RibbonRight>
      </RibbonTabs>
      <Ribbon>
        <RGroup $w={168}>
          <RBody $pad={102}>
            <SmallCol $gap={11} $top={10}>
              <SmallBtn><Cross size={10} color="#d0152e" w={2.4} />Delete <Drop /></SmallBtn>
              <SmallBtn><RenameIcon />Rename</SmallBtn>
            </SmallCol>
          </RBody>
          <RLabel>Organize</RLabel>
        </RGroup>
        <RGroup $w={84}>
          <RBody $pad={12} $gap={11}>
            <BigBtn>
              <BigFolder />
              <BigLabel>{"New\nfolder"}</BigLabel>
            </BigBtn>
            <SmallCol $gap={6}>
              <CopyIcon />
              <NewItemIcon />
            </SmallCol>
          </RBody>
          <RLabel>New</RLabel>
        </RGroup>
        <RGroup $w={134}>
          <RBody $pad={5} $gap={5}>
            <BigBtn>
              <PropertiesIcon />
              <BigLabel>Properties</BigLabel>
              <Drop />
            </BigBtn>
            <SmallCol>
              <SmallBtn><OpenIcon />Open <Drop /></SmallBtn>
              <SmallBtn $dim><EditIcon />Edit</SmallBtn>
              <SmallBtn><HistoryIcon />History</SmallBtn>
            </SmallCol>
          </RBody>
          <RLabel>Open</RLabel>
        </RGroup>
        <RGroup $w={115}>
          <RBody $pad={7}>
            <SmallCol>
              <SmallBtn><SelectIcon fill={[true, true, true, true]} />Select all</SmallBtn>
              <SmallBtn><SelectIcon fill={[false, false, false, false]} />Select none</SmallBtn>
              <SmallBtn><SelectIcon fill={[false, true, true, false]} />Invert selection</SmallBtn>
            </SmallCol>
          </RBody>
          <RLabel>Select</RLabel>
        </RGroup>
      </Ribbon>
      <AddressRow>
        <AddrBox>
          <Chevron dir="down" color="#555" />
          <ReloadArrowSmall />
        </AddrBox>
        <SearchBoxEx>Search Kapu <SmallMagnifier /></SearchBoxEx>
      </AddressRow>
      <FileList>
        <FileHead>
          <HeadCell>Name</HeadCell>
          <HeadCell>Date modified</HeadCell>
          <HeadCell>Type</HeadCell>
          <HeadCell>Size</HeadCell>
        </FileHead>
        {files.map((f) => (
          <FileRow key={f.date + f.type} $selected={f.selected}>
            <div />
            <div>{f.date}</div>
            <div>{f.type}</div>
            <FileSize>{f.size}</FileSize>
          </FileRow>
        ))}
      </FileList>
      <ExHScroll>
        <ExThumb />
        <ExArrow><Chevron color="#555" /></ExArrow>
      </ExHScroll>
      <StatusBar>
        <ViewBtn $on><ViewDetails /></ViewBtn>
        <ViewBtn><ViewPreview /></ViewBtn>
      </StatusBar>
    </Win>
  );
}

function TaskManager() {
  const tabs: [string, number][] = [["Performance", 78], ["App history", 73], ["Startup", 51], ["Users", 39], ["Details", 48], ["Services", 52]];
  return (
    <Win $x={115} $y={52} $w={665} $h={593}>
      <TmTitle>
        <TaskManagerIcon />
        Task Manager
        <WinControls>
          <Minimize />
          <Maximize />
          <Cross />
        </WinControls>
      </TmTitle>
      <TmMenu>
        <span>File</span>
        <span>Options</span>
        <span>View</span>
      </TmMenu>
      <TmTabs>
        <TmTab $w={66} $on>Processes</TmTab>
        {tabs.map(([t, w]) => (<TmTab key={t} $w={w}>{t}</TmTab>))}
      </TmTabs>
      <TmHead>
        <TmNameCol>
          <SortCaret><Chevron dir="up" color="#555" /></SortCaret>
          Name
        </TmNameCol>
        <TmBlank />
        <TmPct>14%</TmPct>
        <TmPct>53%</TmPct>
        <TmPct>5%</TmPct>
      </TmHead>
      <TmBody>
        <TmRows>
          {processes.map((p, i) => (
            <TmRow key={i} $selected={p.selected}>
              <TmChevron>{p.expand && <Chevron color="#888" />}</TmChevron>
              {p.icon}
              <TmRowName>{p.name}</TmRowName>
              <HeatCell />
            </TmRow>
          ))}
        </TmRows>
        <TmVScroll>
          <Chevron dir="up" color="#555" />
          <TmVThumb />
          <Chevron dir="down" color="#555" />
        </TmVScroll>
      </TmBody>
      <TmHScroll>
        <TmHArrow><Chevron dir="left" color="#555" /></TmHArrow>
        <TmHThumb />
      </TmHScroll>
      <TmFooter>
        <FewerCircle><Chevron dir="up" color="#888" size={10} w={1} /></FewerCircle>
        Fewer details
        <EndTask />
      </TmFooter>
    </Win>
  );
}

function PropertiesDialog() {
  return (
    <DialogWin $x={397} $y={161} $w={362} $h={508}>
      <DlgTitle>
        <PrinterIcon />
        spoolsv.exe Properties
        <DlgClose><Cross size={12} color="#222" /></DlgClose>
      </DlgTitle>
      <DlgTabs>
        <DlgTab $w={49}>General</DlgTab>
        <DlgTab $w={53} $on>Security</DlgTab>
        <DlgTab $w={44}>Details</DlgTab>
        <DlgTab $w={94}>Previous Versions</DlgTab>
      </DlgTabs>
      <DlgPanel>
        <ObjectRow>
          <ObjectLabel>Object name:</ObjectLabel>
          C:\Windows\System32\spoolsv.exe
        </ObjectRow>
        <PlainLine>Group or user names:</PlainLine>
        <UserBox>
          <UserRows>
            {users.map((u) => (
              <UserRow key={u.name}>
                {u.icon}
                <UserName $selected={u.selected}>{u.name}</UserName>
              </UserRow>
            ))}
          </UserRows>
          <UserV>
            <Chevron dir="up" color="#555" />
            <UserVThumb />
            <Chevron dir="down" color="#555" />
          </UserV>
          <UserH>
            <UserHArrow><Chevron dir="left" color="#555" /></UserHArrow>
            <UserHThumb />
            <UserHArrow $end><Chevron color="#555" /></UserHArrow>
          </UserH>
          <UserCorner />
        </UserBox>
        <ActionRow>
          <PlainLine>To change permissions, click Edit.</PlainLine>
          <DlgButton><Shield />Edit...</DlgButton>
        </ActionRow>
        <PermHead>
          <PermTitle>{"Permissions for ALL\nAPPLICATION PACKAGES"}</PermTitle>
          <PermCol>Allow</PermCol>
          <PermCol>Deny</PermCol>
        </PermHead>
        <PermBox>
          {permissions.map((p) => (
            <PermRow key={p.name}>
              <span>{p.name}</span>
              {p.allow ? <Check /> : <span />}
            </PermRow>
          ))}
        </PermBox>
        <ActionRow>
          <AdvancedText>{"For special permissions or advanced settings,\nclick Advanced."}</AdvancedText>
          <DlgButton>Advanced</DlgButton>
        </ActionRow>
      </DlgPanel>
      <DlgFooter>
        <DlgButton $w={73} $primary>OK</DlgButton>
        <DlgButton $w={73}>Cancel</DlgButton>
        <DlgButton $w={73} $off>Apply</DlgButton>
      </DlgFooter>
    </DialogWin>
  );
}

function TaskbarRow() {
  return (
    <Taskbar>
      <StartBtn>
        <svg width={17} height={17} viewBox="0 0 17 17" fill="#fff"><path d="M0 2.5l7-1v6.5H0zM8 1.3L17 0v8H8zM0 9h7v6.5l-7-1zM8 9h9v8l-9-1.3z" /></svg>
      </StartBtn>
      <SearchBar>
        <svg width={17} height={17} viewBox="0 0 17 17" fill="none" stroke="#222" strokeWidth="1.2"><circle cx="10.5" cy="6.5" r="5.5" /><path d="M6.5 10.5L1 16" /></svg>
        Type here to search
        <SearchArt><Lotus /></SearchArt>
      </SearchBar>
      <TaskItem $w={50}>
        <svg width={16} height={16} viewBox="0 0 16 16" fill="none" stroke="#fff"><rect x="1.5" y="3.5" width="11" height="9" /><path d="M1 1h12M1 15h12M15 3v2M15 7v2M15 11v2" /></svg>
      </TaskItem>
      <TaskItem $open><Edge /></TaskItem>
      <TaskItem $open><TaskFolder /></TaskItem>
      <TaskItem><Firefox /></TaskItem>
      <TaskItem $open $active><TaskManagerIcon size={26} /></TaskItem>
      <Tray>
        <TrayIcon><Chevron dir="up" color="#fff" size={12} w={1} /></TrayIcon>
        <TrayIcon>
          <svg width={12} height={14} viewBox="0 0 12 14"><rect width="12" height="14" fill="#8a8f94" /><path d="M0 12h12" stroke="#ddd" /></svg>
        </TrayIcon>
        <TrayIcon>
          <svg width={16} height={16} viewBox="0 0 16 16" fill="none" stroke="#fff"><circle cx="7" cy="8" r="6.5" strokeDasharray="5 4" /><rect x="3" y="5" width="6" height="6" /><path d="M9 7l3-1v4l-3-1" /></svg>
        </TrayIcon>
        <TrayIcon>
          <svg width={16} height={15} viewBox="0 0 16 15" fill="none" stroke="#fff"><rect x="4.5" y="1.5" width="11" height="9" /><rect x=".5" y=".5" width="4" height="4" /><path d="M10 10v3M6 13.5h8" /></svg>
        </TrayIcon>
        <TrayIcon>
          <svg width={16} height={14} viewBox="0 0 16 14" fill="none" stroke="#fff"><path d="M1 5h2l3-3v10L3 9H1zM9 5a3 3 0 0 1 0 4M11 3a6 6 0 0 1 0 8M13 1a9 9 0 0 1 0 12" /></svg>
        </TrayIcon>
        <Clock>12:26 AM<br />12/28/2024</Clock>
        <svg width={16} height={15} viewBox="0 0 16 15" fill="none" stroke="#fff"><path d="M.5.5h15v11h-4l-2.5 3-1-3H.5z" /></svg>
      </Tray>
    </Taskbar>
  );
}

export default function App() {
  return (
    <Screen>
      <GlobalStyle />
      <BrowserBehind />
      <TaskbarRow />
      <Explorer />
      <TaskManager />
      <PropertiesDialog />
      <MarkGlow />
      <Watermark>
        <MarkText>ANY</MarkText>
        <MarkShape width={58} height={62} viewBox="0 0 60 62" fill="none" stroke="rgba(255,255,255,.6)" strokeWidth="3">
          <path d="M2 2v56l4 2L58 33 6 4zM12 16v30l28-15z" />
        </MarkShape>
        <MarkText>RUN</MarkText>
      </Watermark>
    </Screen>
  );
}
